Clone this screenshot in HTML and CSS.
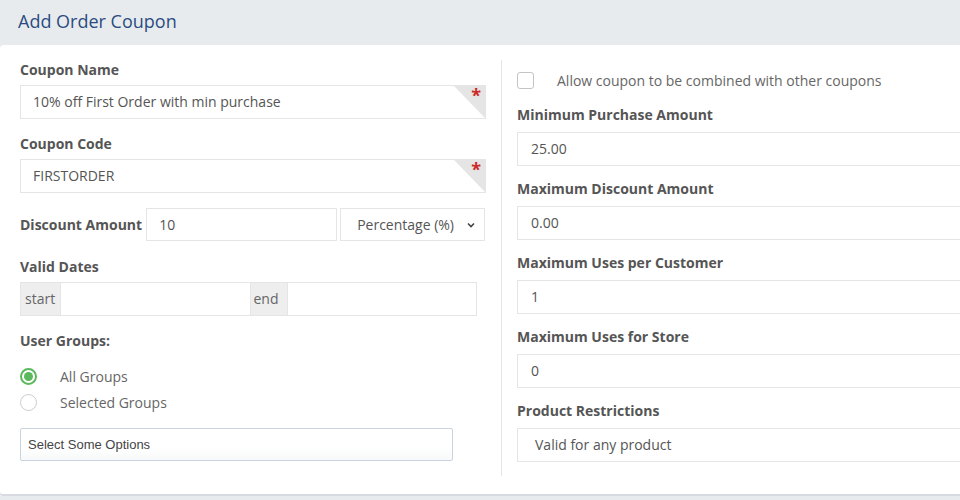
FILE: index.html
```html
<!DOCTYPE html>
<html lang="en">
<head>
  <meta charset="UTF-8" />
  <title>Add Order Coupon</title>
  <link rel="stylesheet" href="styles.css">
</head>
<body>
  <div class="page-head">
    <h1>Add Order Coupon</h1>
  </div>

  <div class="panel">
    <div class="col-left">
      <div class="form-group">
        <label>Coupon Name</label>
        <div class="field required">10% off First Order with min purchase</div>
      </div>

      <div class="form-group">
        <label>Coupon Code</label>
        <div class="field required">FIRSTORDER</div>
      </div>

      <div class="form-group inline-row">
        <label>Discount Amount</label>
        <div class="field amount">10</div>
        <div class="field select type-select">
          <span>Percentage (%)</span>
          <svg class="chev" width="10" height="10" viewBox="0 0 10 10"><path d="M2 3.5 L5 6.5 L8 3.5" fill="none" stroke="#444" stroke-width="1.6"/></svg>
        </div>
      </div>

      <div class="form-group">
        <label>Valid Dates</label>
        <div class="date-group">
          <span class="addon">start</span>
          <div class="field date"></div>
          <span class="addon">end</span>
          <div class="field date"></div>
        </div>
      </div>

      <div class="form-group">
        <label>User Groups:</label>
        <div class="radio-list">
          <div class="radio-row"><span class="radio checked"></span>All Groups</div>
          <div class="radio-row"><span class="radio"></span>Selected Groups</div>
        </div>
        <div class="chosen">Select Some Options</div>
      </div>
    </div>

    <div class="col-right">
      <div class="check-row">
        <span class="checkbox"></span>
        Allow coupon to be combined with other coupons
      </div>

      <div class="form-group">
        <label>Minimum Purchase Amount</label>
        <div class="field">25.00</div>
      </div>

      <div class="form-group">
        <label>Maximum Discount Amount</label>
        <div class="field">0.00</div>
      </div>

      <div class="form-group">
        <label>Maximum Uses per Customer</label>
        <div class="field">1</div>
      </div>

      <div class="form-group">
        <label>Maximum Uses for Store</label>
        <div class="field">0</div>
      </div>

      <div class="form-group">
        <label>Product Restrictions</label>
        <div class="field select">Valid for any product</div>
      </div>
    </div>
  </div>
</body>
</html>
```

FILE: styles.css
```css
* {
  margin: 0;
  padding: 0;
  box-sizing: border-box;
}

body {
  background-color: #e8ebee;
  font-family: 'Open Sans', sans-serif;
  color: #555;
  font-size: 14px;
  overflow: hidden;
  width: 960px;
  height: 500px;
}

.page-head {
  height: 45px;
  padding: 0 18px;
  display: flex;
  align-items: center;
}

.page-head h1 {
  font-size: 18px;
  font-weight: normal;
  color: #2b4c80;
  margin-top: -4px;
}

.panel {
  width: 1000px;
  height: 451px;
  background-color: #fff;
  border-radius: 4px 0 0 4px;
  border-bottom: 2px solid #d7dbdf;
  padding: 15px 0 0 20px;
  display: grid;
  grid-template-columns: 466px 1fr;
}

.col-right {
  margin-left: 15px;
  padding-left: 15px;
  border-left: 1px solid #e5e5e5;
  height: 416px;
}

.form-group {
  margin-bottom: 15px;
}

.form-group label {
  display: block;
  font-weight: bold;
  line-height: 20px;
  margin-bottom: 5px;
  color: #555;
}

.field {
  height: 34px;
  border: 1px solid #e5e5e5;
  padding: 0 12px;
  line-height: 32px;
  color: #555;
  background-color: #fff;
  position: relative;
}

.field.required::after {
  content: "";
  position: absolute;
  top: 0;
  right: 0;
  border-top: 32px solid #e5e5e5;
  border-left: 31px solid transparent;
}

.field.required::before {
  content: "*";
  position: absolute;
  top: -1px;
  right: 4px;
  color: #cc2a2a;
  font-size: 18px;
  font-weight: bold;
  line-height: 20px;
  z-index: 1;
}

.inline-row {
  display: flex;
  align-items: center;
  gap: 3px;
  margin-top: 15px;
  margin-bottom: 16px;
}

.inline-row label {
  margin-bottom: 0;
  margin-right: 1px;
}

.field.amount {
  width: 191px;
  height: 33px;
  line-height: 31px;
}

.field.select {
  display: flex;
  align-items: center;
}

.type-select {
  width: 145px;
  height: 33px;
  padding: 0 8px 0 16px;
  justify-content: space-between;
}

.chev {
  display: block;
}

.date-group {
  display: flex;
  width: 457px;
}

.addon {
  background-color: #eee;
  border: 1px solid #e5e5e5;
  border-right: none;
  padding: 0 4px;
  height: 34px;
  line-height: 32px;
  color: #666;
}

.date-group .addon:first-child {
  width: 40px;
}

.date-group .addon:nth-child(3) {
  width: 36px;
  padding-left: 3px;
  border-left: none;
}

.field.date {
  flex: 1;
}

.radio-list {
  margin-top: 12px;
}

.radio-row {
  display: flex;
  align-items: center;
  height: 26px;
  color: #666;
}

.radio {
  width: 17px;
  height: 17px;
  border: 1px solid #ccc;
  border-radius: 50%;
  margin-right: 23px;
  position: relative;
}

.radio.checked {
  border: 2px solid #5cb85c;
}

.radio.checked::after {
  content: "";
  position: absolute;
  top: 2px;
  left: 2px;
  width: 9px;
  height: 9px;
  border-radius: 50%;
  background-color: #5cb85c;
}

.chosen {
  margin-top: 13px;
  width: 433px;
  height: 33px;
  border: 1px solid #c8d4df;
  border-radius: 2px;
  font-family: 'Liberation Sans', Arial, sans-serif;
  font-size: 13px;
  color: #444;
  padding: 0 7px;
  line-height: 31px;
  background: linear-gradient(#fff 60%, #f7f8f9);
}

.check-row {
  display: flex;
  align-items: center;
  height: 20px;
  margin-top: 10px;
  margin-bottom: 15px;
  color: #666;
}

.checkbox {
  width: 17px;
  height: 17px;
  border: 1px solid #c4c4c4;
  border-radius: 3px;
  margin-right: 23px;
}

.col-right .form-group label {
  margin-bottom: 7px;
}

.col-right .form-group {
  margin-bottom: 13px;
}

.col-right .field {
  padding-left: 13px;
}

.col-right .field.select {
  padding-left: 17px;
}
```
